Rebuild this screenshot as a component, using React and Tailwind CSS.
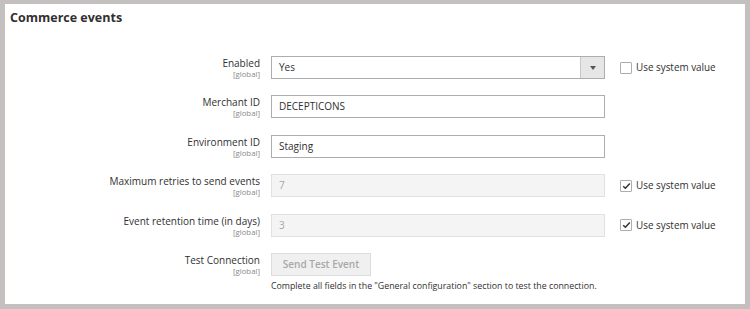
import React from "react";

const font = { fontFamily: '"Open Sans", "Liberation Sans", sans-serif' };

function Label({ text }) {
  return (
    <div className="w-[255px] shrink-0 text-right pt-[1px]">
      <div className="text-[10px] leading-[13px] text-[#303030]">{text}</div>
      <div className="text-[7.8px] leading-[9px] text-[#8a8a8a]">[global]</div>
    </div>
  );
}

function Check({ checked }) {
  return (
    <div className="ml-[15px] flex items-center h-[23px]">
      <div className="w-[12px] h-[12px] border border-[#adadad] bg-white rounded-[1px] flex items-center justify-center">
        {checked && (
          <svg width="9" height="8" viewBox="0 0 9 8">
            <path d="M1.2 4.2 L3.4 6.3 L7.8 1.5" fill="none" stroke="#333" strokeWidth="1.5" />
          </svg>
        )}
      </div>
      <span className="ml-[4px] text-[9.9px] text-[#303030]">Use system value</span>
    </div>
  );
}

function Row({ label, children, check }) {
  return (
    <div className="flex items-start">
      <Label text={label} />
      <div className="ml-[11px]">{children}</div>
      {check !== undefined && <Check checked={check} />}
    </div>
  );
}

function Input({ value, disabled }) {
  return (
    <div
      className={
        "w-[334px] h-[23px] border flex items-center px-[7px] text-[10px] " +
        (disabled
          ? "bg-[#f4f4f4] border-[#e1e1e1] text-[#a6a6a6]"
          : "bg-white border-[#adadad] text-[#303030]")
      }
    >
      {value}
    </div>
  );
}

export default function App() {
  return (
    <div style={font} className="w-[750px] h-[309px] bg-[#c4c0c0] pt-[4px] px-[5px] pb-[5px]">
      <div className="bg-white h-full pl-[5px] pt-[5px]">
        <div className="text-[12.5px] font-bold text-[#303030] leading-[18px]">Commerce events</div>
        <div className="mt-[29px] -ml-[5px] flex flex-col gap-[16.4px]">
          <Row label="Enabled" check={false}>
            <div className="w-[334px] h-[23px] border border-[#adadad] bg-white flex text-[10px] text-[#303030]">
              <div className="flex-1 flex items-center px-[7px]">Yes</div>
              <div className="w-[24px] border-l border-[#c8c8c8] bg-[#e6e6e6] flex items-center justify-center">
                <svg width="6" height="4" viewBox="0 0 6 4">
                  <path d="M0 0 L6 0 L3 4 Z" fill="#555" />
                </svg>
              </div>
            </div>
          </Row>
          <Row label="Merchant ID">
            <Input value="DECEPTICONS" />
          </Row>
          <Row label="Environment ID">
            <Input value="Staging" />
          </Row>
          <Row label="Maximum retries to send events" check={true}>
            <Input value="7" disabled />
          </Row>
          <Row label="Event retention time (in days)" check={true}>
            <Input value="3" disabled />
          </Row>
          <Row label="Test Connection">
            <div>
              <div className="w-[100px] h-[23px] border border-[#dcdcdc] bg-[#f0f0f0] flex items-center justify-center text-[10px] font-semibold text-[#a8a8a8]">
                Send Test Event
              </div>
              <div className="mt-[4px] text-[8.8px] leading-[12px] text-[#303030] whitespace-nowrap">
                Complete all fields in the "General configuration" section to test the connection.
              </div>
            </div>
          </Row>
        </div>
      </div>
    </div>
  );
}
